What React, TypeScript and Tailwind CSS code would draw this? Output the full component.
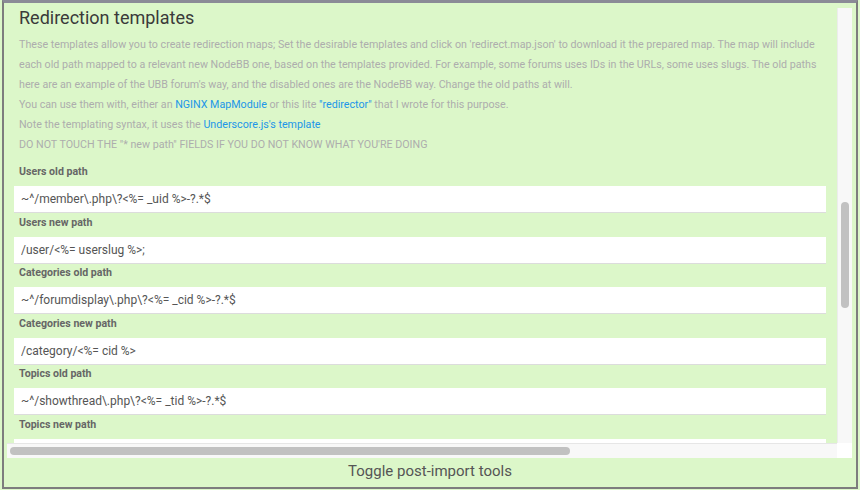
import React from "react";

type PathField = { label: string; value: string };

const fields: PathField[] = [
  { label: "Users old path", value: "~^/member\\.php\\?<%= _uid %>-?.*$" },
  { label: "Users new path", value: "/user/<%= userslug %>;" },
  { label: "Categories old path", value: "~^/forumdisplay\\.php\\?<%= _cid %>-?.*$" },
  { label: "Categories new path", value: "/category/<%= cid %>" },
  { label: "Topics old path", value: "~^/showthread\\.php\\?<%= _tid %>-?.*$" },
  { label: "Topics new path", value: "/topic/<%= tid %>" },
];

function Field({ label, value }: PathField) {
  return (
    <div className="pt-[2.6px]">
      <label className="mb-[7px] block pl-[5px] text-[10.6px] leading-[14px] font-bold text-[#666]">
        {label}
      </label>
      <input
        readOnly
        defaultValue={value}
        className="block h-[27px] w-full border-b border-[#dcdcdc] bg-white px-[7px] text-[12px] text-[#555] outline-none"
      />
    </div>
  );
}

function VerticalScrollbar() {
  return (
    <div className="mt-[5px] w-[15px] shrink-0 border-l border-[#ececec] bg-[#f8f8f8] pt-[194px] pl-[3px]">
      <div className="h-[106px] w-[8px] rounded-full bg-[#c1c1c1]" />
    </div>
  );
}

function HorizontalScrollbar() {
  return (
    <div className="ml-[3px] mr-[4px] flex h-[15px] shrink-0">
      <div className="flex-1 border-t border-[#e6e6e6] bg-[#f8f8f8] pt-[3px] pl-[3px]">
        <div className="h-[8px] w-[560px] rounded-full bg-[#c1c1c1]" />
      </div>
      <div className="w-[15px] bg-white" />
    </div>
  );
}

export default function App() {
  return (
    <div className="h-[490px] w-[860px] bg-[#dcf7c9] pl-[2px] font-['Roboto',sans-serif]">
      <div className="flex h-[489px] w-[856px] flex-col border-x-2 border-t-[3px] border-b-2 border-x-[#7d7d7d] border-t-[#8b8b97] border-b-[#7d7d7d]">
        <div className="flex min-h-0 flex-1">
          <div className="min-w-0 flex-1 overflow-hidden pl-[10px] pr-[11px]">
            <h3 className="pt-[2.5px] pl-[5px] text-[18px] leading-[24px] text-[#3a3a3a]">
              Redirection templates
            </h3>
            <div className="mt-[5.5px] pl-[5px] pr-[2px] text-[10.7px] leading-[20px] text-[#adadad]">
              <p>
                These templates allow you to create redirection maps; Set the desirable templates and
                click on 'redirect.map.json' to download it the prepared map. The map will include
                each old path mapped to a relevant new NodeBB one, based on the templates provided.
                For example, some forums uses IDs in the URLs, some uses slugs. The old paths here
                are an example of the UBB forum's way, and the disabled ones are the NodeBB way.
                Change the old paths at will.
              </p>
              <p>
                You can use them with, either an{" "}
                <a className="text-[#2196e8]">NGINX MapModule</a> or this lite{" "}
                <a className="text-[#2196e8]">"redirector"</a> that I wrote for this purpose.
              </p>
              <p>
                Note the templating syntax, it uses the{" "}
                <a className="text-[#2196e8]">Underscore.js's template</a>
              </p>
              <p>DO NOT TOUCH THE "* new path" FIELDS IF YOU DO NOT KNOW WHAT YOU'RE DOING</p>
            </div>
            <div className="mt-[7.4px]">
              {fields.map((f) => (
                <Field key={f.label} {...f} />
              ))}
            </div>
          </div>
          <VerticalScrollbar />
          <div className="w-[4px] shrink-0" />
        </div>
        <HorizontalScrollbar />
        <div className="flex h-[29px] shrink-0 items-center justify-center pb-[3px] text-[15px] text-[#555]">
          Toggle post-import tools
        </div>
      </div>
    </div>
  );
}
